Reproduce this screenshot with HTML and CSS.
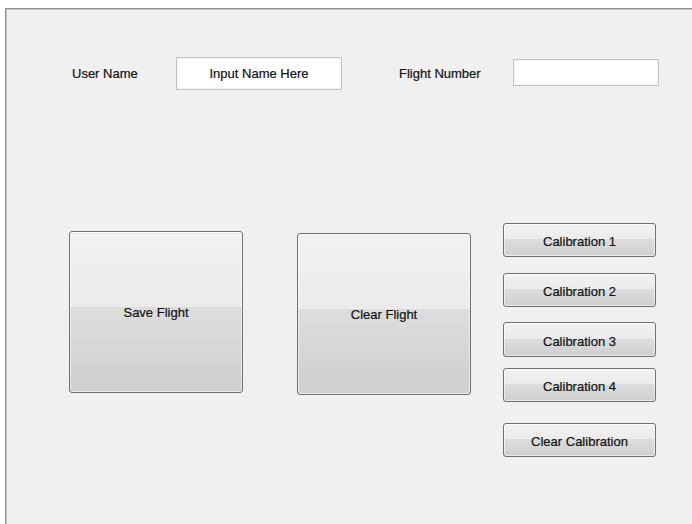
FILE: index.html
```html
<!DOCTYPE html>
<html lang="en">
<head>
<meta charset="utf-8">
<title>Flight Logger</title>
<link rel="stylesheet" href="styles.css">
</head>
<body>
<div class="panel">
  <div class="entry-row">
    <span class="label label-user">User Name</span>
    <div class="field field-name">Input Name Here</div>
    <span class="label label-flight">Flight Number</span>
    <div class="field field-number"></div>
  </div>
  <div class="action-row">
    <button class="btn btn-big btn-save">Save Flight</button>
    <button class="btn btn-big btn-clear">Clear Flight</button>
    <div class="cal-column">
      <button class="btn btn-cal">Calibration 1</button>
      <button class="btn btn-cal cal-2">Calibration 2</button>
      <button class="btn btn-cal cal-3">Calibration 3</button>
      <button class="btn btn-cal cal-4">Calibration 4</button>
      <button class="btn btn-cal cal-clear">Clear Calibration</button>
    </div>
  </div>
</div>
</body>
</html>
```

FILE: styles.css
```css
html, body {
  margin: 0;
  padding: 0;
  background: #ffffff;
  height: 100%;
  overflow: hidden;
}

body {
  font-family: "Liberation Sans", Arial, sans-serif;
  font-size: 13px;
  color: #111111;
  -webkit-text-stroke: 0.2px #111111;
}

/* main figure panel with its etched top/left edge */
.panel {
  box-sizing: border-box;
  margin: 8px 0 0 5px;
  height: calc(100% - 8px);
  background: #f0f0f0;
  border-top: 1px solid #8f8f8f;
  border-left: 1px solid #8f8f8f;
  box-shadow: inset 1px 1px 0 #c4c4c4;
  padding: 1px 0 0 1px;
}

/* name / flight number inputs */
.entry-row {
  display: flex;
  align-items: flex-start;
  margin-top: 47px;
  padding-left: 65px;
  height: 33px;
}

.label {
  line-height: 33px;
  white-space: nowrap;
}

.label-user {
  width: 104px;
}

.label-flight {
  width: 114px;
  margin-left: 57px;
}

.field {
  box-sizing: border-box;
  background: #ffffff;
  border: 1px solid #c3c3c3;
  box-shadow: inset 0 0 0 1px #f4f4f4;
  text-align: center;
}

.field-name {
  width: 166px;
  height: 33px;
  line-height: 31px;
}

.field-number {
  width: 146px;
  height: 27px;
  margin-top: 2px;
}

/* push buttons */
.action-row {
  display: flex;
  align-items: flex-start;
  margin-top: 133px;
  padding-left: 62px;
}

.btn {
  box-sizing: border-box;
  font-family: inherit;
  font-size: 13px;
  color: #111111;
  -webkit-text-stroke: 0.2px #111111;
  border: 1px solid #707070;
  border-radius: 3px;
  background: linear-gradient(#f2f2f2 0%, #ebebeb 47%, #dddddd 47%, #cfcfcf 100%);
  box-shadow: inset 0 0 0 1px rgba(255, 255, 255, 0.55);
  padding: 0;
  margin: 0;
  text-align: center;
}

.btn-big {
  width: 174px;
  height: 162px;
}

.btn-save {
  margin-top: 8px;
}

.btn-clear {
  margin-top: 10px;
  margin-left: 54px;
}

.cal-column {
  display: flex;
  flex-direction: column;
  margin-left: 32px;
}

.btn-cal {
  width: 153px;
  height: 34px;
  padding-top: 3px;
}

.cal-2 {
  margin-top: 16px;
}

.cal-3 {
  margin-top: 15px;
  height: 35px;
}

.cal-4 {
  margin-top: 11px;
}

.cal-clear {
  margin-top: 21px;
}
```
